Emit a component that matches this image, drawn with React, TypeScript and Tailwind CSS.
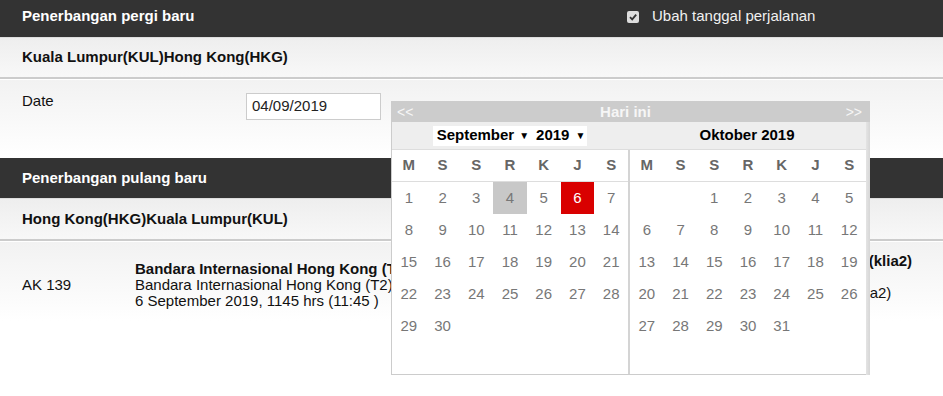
import React from 'react';

const sept: (number | null)[] = [
  1, 2, 3, 4, 5, 6, 7, 8, 9, 10, 11, 12, 13, 14, 15, 16, 17, 18, 19, 20, 21,
  22, 23, 24, 25, 26, 27, 28, 29, 30,
];
const okt: (number | null)[] = [
  null, null, 1, 2, 3, 4, 5, 6, 7, 8, 9, 10, 11, 12, 13, 14, 15, 16, 17, 18,
  19, 20, 21, 22, 23, 24, 25, 26, 27, 28, 29, 30, 31,
];
const dayNames = ['M', 'S', 'S', 'R', 'K', 'J', 'S'];

const pad = (days: (number | null)[]) => {
  const out = [...days];
  while (out.length < 42) out.push(null);
  return out;
};

const MonthGrid: React.FC<{ days: (number | null)[]; today?: number; picked?: number }> = ({ days, today, picked }) => (
  <div className="flex-1">
    <div className="grid grid-cols-7 h-[32px] border-b border-[#ddd] items-center text-center font-bold text-[15px] text-[#666]">
      {dayNames.map((d, i) => (
        <span key={i}>{d}</span>
      ))}
    </div>
    <div className="grid grid-cols-7 text-center text-[15px] text-[#777]">
      {pad(days).map((d, i) => {
        let cls = 'h-[32px] flex items-center justify-center';
        if (d !== null && d === picked) cls += ' bg-[#c8c8c8]';
        if (d !== null && d === today) cls += ' bg-[#d90000] text-white';
        return (
          <span key={i} className={cls}>
            {d ?? ''}
          </span>
        );
      })}
    </div>
  </div>
);

const Calendar: React.FC = () => (
  <div className="absolute left-[391px] top-[101px] w-[479px] text-[15px]">
    <div className="h-[21px] bg-[#ccc] grid grid-cols-3 items-center px-[6px] text-[#f6f6f6] text-[14px]">
      <span>&lt;&lt;</span>
      <span className="font-bold text-[15px] text-center pr-[10px]">Hari ini</span>
      <span className="text-right pr-[2px]">&gt;&gt;</span>
    </div>
    <div className="flex">
      <div className="w-[475px] border-l border-b border-[#ccc]">
        <div className="h-[28px] bg-[#eee] flex items-center border-b border-[#ddd] text-black font-bold">
          <div className="w-[236px] flex justify-center">
            <div className="bg-white h-[20px] pl-[4px] pr-[2px] flex items-center">
              <span>September</span>
              <span className="ml-[5px] text-[10px]">▼</span>
              <span className="ml-[7px]">2019</span>
              <span className="ml-[6px] text-[10px]">▼</span>
            </div>
          </div>
          <div className="flex-1 text-center">Oktober 2019</div>
        </div>
        <div className="flex bg-white">
          <MonthGrid days={sept} picked={4} today={6} />
          <div className="w-[2px] bg-[#d4d4d4]" />
          <MonthGrid days={okt} />
        </div>
      </div>
      <div className="w-[4px] bg-gradient-to-r from-[#e4e4e4] to-[#d6d6d6]" />
    </div>
  </div>
);

export default function App() {
  return (
    <div className="relative w-[943px] h-[396px] overflow-hidden bg-white font-['Liberation_Sans',Arial,sans-serif] text-[#111]">
      <div className="h-[37px] bg-[#333] flex items-center px-[22px] pb-[4px] text-white text-[15px]">
        <span className="w-[605px] font-bold">Penerbangan pergi baru</span>
        <span className="w-[12px] h-[12px] rounded-[2px] bg-[#ddd] flex items-center justify-center">
          <svg width="10" height="10" viewBox="0 0 10 10">
            <path d="M2 5.2 L4.2 7.4 L8.2 2.6" stroke="#333" strokeWidth="1.8" fill="none" />
          </svg>
        </span>
        <span className="ml-[13px] text-[#f0f0f0]">Ubah tanggal perjalanan</span>
      </div>
      <div className="h-[42px] border-t border-[#ddd] border-b-2 border-b-[#ccc] bg-gradient-to-b from-[#eee] to-[#f8f8f8] flex items-center px-[22px] font-bold text-[15px]">
        Kuala Lumpur(KUL)Hong Kong(HKG)
      </div>
      <div className="h-[79px] border-t border-white bg-gradient-to-b from-[#f2f2f2] to-white flex px-[22px] pt-[13px] text-[15px]">
        <span className="w-[224px] leading-[16px]">Date</span>
        <div className="w-[135px] h-[27px] border border-[#ccc] bg-white flex items-center px-[5px] text-[#222]">04/09/2019</div>
      </div>
      <div className="h-[41px] bg-[#333] border-b border-[#ddd] flex items-center px-[22px] text-white text-[15px] font-bold">
        Penerbangan pulang baru
      </div>
      <div className="h-[42px] border-b-2 border-[#ccc] bg-gradient-to-b from-[#eee] to-[#f8f8f8] flex items-center px-[22px] font-bold text-[15px]">
        Hong Kong(HKG)Kuala Lumpur(KUL)
      </div>
      <div className="h-[80px] border-t border-white bg-gradient-to-b from-[#f2f2f2] to-white flex items-center px-[22px] pt-[6px] text-[15px] leading-[16px] text-[#111]">
        <span className="w-[113px]">AK 139</span>
        <div className="w-[467px] whitespace-nowrap overflow-hidden">
          <div className="font-bold">Bandara Internasional Hong Kong (T2)</div>
          <div>Bandara Internasional Hong Kong (T2)</div>
          <div>6 September 2019, 1145 hrs (11:45 )</div>
        </div>
        <div className="whitespace-nowrap">
          <div className="font-bold">Bandara Internasional Kuala Lumpur (klia2)</div>
          <div>&nbsp;</div>
          <div>Bandara Internasional Kuala Lumpur (klia2)</div>
          <div>&nbsp;</div>
        </div>
      </div>
      <Calendar />
    </div>
  );
}
